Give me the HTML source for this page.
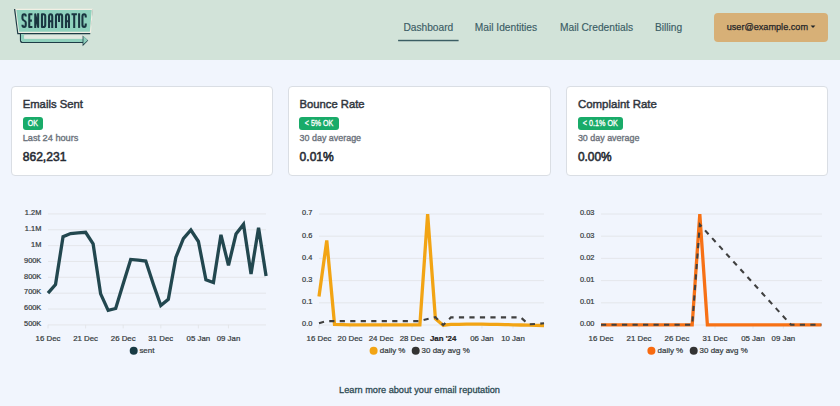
<!DOCTYPE html>
<html><head><meta charset="utf-8"><title>Sendamatic Dashboard</title>
<style>
html,body{margin:0;padding:0;}
body{width:840px;height:406px;overflow:hidden;background:#f1f5fd;position:relative;font-family:"Liberation Sans", sans-serif;}
.hdr{position:absolute;left:0;top:0;width:840px;height:59.6px;background:#d2e3d9;}
.btn{position:absolute;left:714px;top:13px;width:114px;height:29px;background:#d7b077;border-radius:4px;}
.card{position:absolute;top:85.9px;height:89.7px;background:#fff;border:1px solid #dadee4;border-radius:4px;box-sizing:border-box;}
.badge{position:absolute;top:117px;height:13px;background:#19ab69;border-radius:3px;z-index:2;}
svg.ov{position:absolute;left:0;top:0;z-index:3;font-family:"Liberation Sans", sans-serif;}
</style></head>
<body>
<div class="hdr"></div>
<div class="btn"></div>
<div class="badge" style="left:22.5px;width:20.8px"></div><div class="card" style="left:11.1px;width:261.7px"></div><div class="badge" style="left:299.4px;width:39.3px"></div><div class="card" style="left:288.0px;width:263.0px"></div><div class="badge" style="left:577.7px;width:45.2px"></div><div class="card" style="left:566.3px;width:261.7px"></div>
<svg class="ov" width="840" height="406" viewBox="0 0 840 406">
<text x="403.4" y="31.1" font-size="10.2" font-weight="normal" fill="#3b5d65" text-anchor="start" stroke="#3b5d65" stroke-width="0.15">Dashboard</text>
<text x="474.8" y="31.1" font-size="10.2" font-weight="normal" fill="#3b5d65" text-anchor="start" stroke="#3b5d65" stroke-width="0.15">Mail Identities</text>
<text x="560.0" y="31.1" font-size="10.2" font-weight="normal" fill="#3b5d65" text-anchor="start" stroke="#3b5d65" stroke-width="0.15">Mail Credentials</text>
<text x="654.9" y="31.1" font-size="10.2" font-weight="normal" fill="#3b5d65" text-anchor="start" stroke="#3b5d65" stroke-width="0.15">Billing</text>
<rect x="398.1" y="39.8" width="60.5" height="1.45" fill="#3b5e64"/>
<text x="726.7" y="30.4" font-size="9.5" font-weight="normal" fill="#1f2428" text-anchor="start" stroke="#1f2428" stroke-width="0.25" textLength="81.3" lengthAdjust="spacingAndGlyphs">user@example.com</text>
<path d="M810.6 25.4 L815.4 25.4 L813 28 Z" fill="#1f2428"/>

<g>
 <path d="M14.0 8.9 L92.8 8.9 L90.2 34.3 L17.3 34.3 Z" fill="#1e3c46"/>
 <path d="M15.2 8.8 L92.9 8.8 L90.9 32.9 L18.3 32.9 Z" fill="#f1efe4"/>
 <path d="M16.3 9.9 L91.7 9.9 L89.9 31.7 L19.0 31.7 Z" fill="#8fd1bd"/>
 <path d="M19.9 34.0 V40.2 Q19.9 43.1 22.8 43.1 H83.4 V41.9 H23.6 Q21.0 41.9 21.0 39.3 V34.0 Z" fill="#1e3c46"/>
 <path d="M21.0 34.2 V39.3 Q21.0 41.9 23.6 41.9 H83.4 V38.7 H24.2 V34.2 Z" fill="#8fd1bd"/>
 <rect x="24.2" y="35.3" width="59.2" height="3.4" fill="#e1e9e1"/>
 <path d="M82.6 35.6 L88.2 40.6 L82.6 46.2 Z" fill="#1e3c46"/>
 <path d="M83.4 35.9 L87.6 40.3 L83.4 44.2 Z" fill="#8fd1bd"/>
 <g fill="none" stroke="#1a3540" stroke-width="2.05" stroke-linejoin="round">
  <path d="M25.75 16.4 Q25.75 14.25 24.1 14.25 Q22.45 14.25 22.45 16.4 L22.45 18.6 Q22.45 19.9 24.1 20.6 Q25.75 21.3 25.75 22.6 L25.75 24.8 Q25.75 26.95 24.1 26.95 Q22.45 26.95 22.45 24.8"/>
  <path d="M32.4 14.25 H29.25 V26.95 H32.4 M29.25 20.6 H31.9"/>
  <path d="M35.25 27.9 V14.25 L38.15 26.95 V13.3"/>
  <path d="M41.95 14.25 V26.95 H43.4 Q45.25 26.95 45.25 24.9 V16.3 Q45.25 14.25 43.4 14.25 Z"/>
  <path d="M49.05 27.9 V16.6 Q49.05 14.25 50.65 14.25 Q52.25 14.25 52.25 16.6 V27.9 M49.05 21.3 H52.25"/>
  <path d="M55.95 27.9 V16.2 Q55.95 14.25 57.5 14.25 Q59.05 14.25 59.05 16.2 V22 M59.05 16.2 Q59.05 14.25 60.6 14.25 Q62.15 14.25 62.15 16.2 V27.9"/>
  <path d="M65.95 27.9 V16.6 Q65.95 14.25 67.45 14.25 Q68.95 14.25 68.95 16.6 V27.9 M65.95 21.3 H68.95"/>
  <path d="M71.5 14.25 H76.9 M74.2 14.25 V27.9"/>
  <path d="M79.1 13.3 V27.9"/>
  <path d="M85.75 17.6 V16.4 Q85.75 14.25 84.1 14.25 Q82.45 14.25 82.45 16.4 V24.8 Q82.45 26.95 84.1 26.95 Q85.75 26.95 85.75 24.8 V23.6"/>
 </g>
</g>
<text x="22.7" y="108.4" font-size="11.4" font-weight="normal" fill="#30353d" text-anchor="start" stroke="#30353d" stroke-width="0.45" textLength="60.2" lengthAdjust="spacingAndGlyphs">Emails Sent</text>
<text x="32.9" y="126.3" font-size="8.2" font-weight="normal" fill="#ffffff" text-anchor="middle" stroke="#ffffff" stroke-width="0.3" textLength="10.2" lengthAdjust="spacingAndGlyphs">OK</text>
<text x="22.7" y="141.2" font-size="8.8" font-weight="normal" fill="#6c737c" text-anchor="start" stroke="#6c737c" stroke-width="0.35" textLength="55.7" lengthAdjust="spacingAndGlyphs">Last 24 hours</text>
<text x="22.7" y="160.8" font-size="12.4" font-weight="normal" fill="#262b33" text-anchor="start" stroke="#262b33" stroke-width="0.55" textLength="43.7" lengthAdjust="spacingAndGlyphs">862,231</text>
<text x="299.6" y="108.4" font-size="11.4" font-weight="normal" fill="#30353d" text-anchor="start" stroke="#30353d" stroke-width="0.45" textLength="65.0" lengthAdjust="spacingAndGlyphs">Bounce Rate</text>
<text x="319.05" y="126.3" font-size="8.2" font-weight="normal" fill="#ffffff" text-anchor="middle" stroke="#ffffff" stroke-width="0.3" textLength="28.5" lengthAdjust="spacingAndGlyphs">&lt; 5% OK</text>
<text x="299.6" y="141.2" font-size="8.8" font-weight="normal" fill="#6c737c" text-anchor="start" stroke="#6c737c" stroke-width="0.35" textLength="61.5" lengthAdjust="spacingAndGlyphs">30 day average</text>
<text x="299.6" y="160.8" font-size="12.4" font-weight="normal" fill="#262b33" text-anchor="start" stroke="#262b33" stroke-width="0.55" textLength="34.2" lengthAdjust="spacingAndGlyphs">0.01%</text>
<text x="577.9" y="108.4" font-size="11.4" font-weight="normal" fill="#30353d" text-anchor="start" stroke="#30353d" stroke-width="0.45" textLength="79.0" lengthAdjust="spacingAndGlyphs">Complaint Rate</text>
<text x="600.3" y="126.3" font-size="8.2" font-weight="normal" fill="#ffffff" text-anchor="middle" stroke="#ffffff" stroke-width="0.3" textLength="35.0" lengthAdjust="spacingAndGlyphs">&lt; 0.1% OK</text>
<text x="577.9" y="141.2" font-size="8.8" font-weight="normal" fill="#6c737c" text-anchor="start" stroke="#6c737c" stroke-width="0.35" textLength="61.5" lengthAdjust="spacingAndGlyphs">30 day average</text>
<text x="577.9" y="160.8" font-size="12.4" font-weight="normal" fill="#262b33" text-anchor="start" stroke="#262b33" stroke-width="0.55" textLength="33.8" lengthAdjust="spacingAndGlyphs">0.00%</text>
<line x1="48.0" y1="213.9" x2="266" y2="213.9" stroke="#e1e2e6" stroke-width="0.8"/>
<line x1="48.0" y1="229.757" x2="266" y2="229.757" stroke="#e1e2e6" stroke-width="0.8"/>
<line x1="48.0" y1="245.614" x2="266" y2="245.614" stroke="#e1e2e6" stroke-width="0.8"/>
<line x1="48.0" y1="261.471" x2="266" y2="261.471" stroke="#e1e2e6" stroke-width="0.8"/>
<line x1="48.0" y1="277.328" x2="266" y2="277.328" stroke="#e1e2e6" stroke-width="0.8"/>
<line x1="48.0" y1="293.185" x2="266" y2="293.185" stroke="#e1e2e6" stroke-width="0.8"/>
<line x1="48.0" y1="309.04200000000003" x2="266" y2="309.04200000000003" stroke="#e1e2e6" stroke-width="0.8"/>
<line x1="48.0" y1="324.899" x2="266" y2="324.899" stroke="#e1e2e6" stroke-width="0.8"/>
<text x="41.3" y="215.20000000000002" font-size="7.4" font-weight="normal" fill="#373d3f" text-anchor="end" stroke="#373d3f" stroke-width="0.22">1.2M</text>
<text x="41.3" y="231.05700000000002" font-size="7.4" font-weight="normal" fill="#373d3f" text-anchor="end" stroke="#373d3f" stroke-width="0.22">1.1M</text>
<text x="41.3" y="246.91400000000002" font-size="7.4" font-weight="normal" fill="#373d3f" text-anchor="end" stroke="#373d3f" stroke-width="0.22">1M</text>
<text x="41.3" y="262.771" font-size="7.4" font-weight="normal" fill="#373d3f" text-anchor="end" stroke="#373d3f" stroke-width="0.22">900K</text>
<text x="41.3" y="278.628" font-size="7.4" font-weight="normal" fill="#373d3f" text-anchor="end" stroke="#373d3f" stroke-width="0.22">800K</text>
<text x="41.3" y="294.485" font-size="7.4" font-weight="normal" fill="#373d3f" text-anchor="end" stroke="#373d3f" stroke-width="0.22">700K</text>
<text x="41.3" y="310.34200000000004" font-size="7.4" font-weight="normal" fill="#373d3f" text-anchor="end" stroke="#373d3f" stroke-width="0.22">600K</text>
<text x="41.3" y="326.199" font-size="7.4" font-weight="normal" fill="#373d3f" text-anchor="end" stroke="#373d3f" stroke-width="0.22">500K</text>
<line x1="48.0" y1="324.899" x2="48.0" y2="328.399" stroke="#e1e2e6" stroke-width="0.8"/>
<text x="48.0" y="341.2" font-size="7.85" font-weight="normal" fill="#373d3f" text-anchor="middle" stroke="#373d3f" stroke-width="0.22">16 Dec</text>
<line x1="85.6" y1="324.899" x2="85.6" y2="328.399" stroke="#e1e2e6" stroke-width="0.8"/>
<text x="85.6" y="341.2" font-size="7.85" font-weight="normal" fill="#373d3f" text-anchor="middle" stroke="#373d3f" stroke-width="0.22">21 Dec</text>
<line x1="123.19999999999999" y1="324.899" x2="123.19999999999999" y2="328.399" stroke="#e1e2e6" stroke-width="0.8"/>
<text x="123.19999999999999" y="341.2" font-size="7.85" font-weight="normal" fill="#373d3f" text-anchor="middle" stroke="#373d3f" stroke-width="0.22">26 Dec</text>
<line x1="160.8" y1="324.899" x2="160.8" y2="328.399" stroke="#e1e2e6" stroke-width="0.8"/>
<text x="160.8" y="341.2" font-size="7.85" font-weight="normal" fill="#373d3f" text-anchor="middle" stroke="#373d3f" stroke-width="0.22">31 Dec</text>
<line x1="198.39999999999998" y1="324.899" x2="198.39999999999998" y2="328.399" stroke="#e1e2e6" stroke-width="0.8"/>
<text x="198.39999999999998" y="341.2" font-size="7.85" font-weight="normal" fill="#373d3f" text-anchor="middle" stroke="#373d3f" stroke-width="0.22">05 Jan</text>
<line x1="228.48" y1="324.899" x2="228.48" y2="328.399" stroke="#e1e2e6" stroke-width="0.8"/>
<text x="228.48" y="341.2" font-size="7.85" font-weight="normal" fill="#373d3f" text-anchor="middle" stroke="#373d3f" stroke-width="0.22">09 Jan</text>
<polyline points="48.00,293.2 55.52,284.5 63.04,236.7 70.56,233.5 78.08,232.8 85.60,232.3 93.12,243.9 100.64,293.9 108.16,310.4 115.68,308.5 123.20,283.8 130.72,259.4 138.24,260.1 145.76,261.1 153.28,284 160.80,305.5 168.32,299.3 175.84,257.4 183.36,238.6 190.88,230 198.40,241.5 205.92,279.8 213.44,282.5 220.96,234.8 228.48,265.4 236.00,234 243.52,224.4 251.04,273.9 258.56,227.7 266.08,276.1" fill="none" stroke="#22474f" stroke-width="3.3" stroke-linejoin="miter" stroke-miterlimit="4"/>
<circle cx="133.7" cy="350.7" r="4" fill="#183a44"/>
<text x="139.4" y="353.0" font-size="7.95" font-weight="normal" fill="#373d3f" text-anchor="start" stroke="#373d3f" stroke-width="0.22">sent</text>
<line x1="319.0" y1="214.0" x2="544" y2="214.0" stroke="#e1e2e6" stroke-width="0.8"/>
<line x1="319.0" y1="236.2" x2="544" y2="236.2" stroke="#e1e2e6" stroke-width="0.8"/>
<line x1="319.0" y1="258.4" x2="544" y2="258.4" stroke="#e1e2e6" stroke-width="0.8"/>
<line x1="319.0" y1="280.6" x2="544" y2="280.6" stroke="#e1e2e6" stroke-width="0.8"/>
<line x1="319.0" y1="302.8" x2="544" y2="302.8" stroke="#e1e2e6" stroke-width="0.8"/>
<line x1="319.0" y1="325.0" x2="544" y2="325.0" stroke="#e1e2e6" stroke-width="0.8"/>
<text x="312.3" y="215.3" font-size="7.4" font-weight="normal" fill="#373d3f" text-anchor="end" stroke="#373d3f" stroke-width="0.22">0.7</text>
<text x="312.3" y="237.5" font-size="7.4" font-weight="normal" fill="#373d3f" text-anchor="end" stroke="#373d3f" stroke-width="0.22">0.6</text>
<text x="312.3" y="259.7" font-size="7.4" font-weight="normal" fill="#373d3f" text-anchor="end" stroke="#373d3f" stroke-width="0.22">0.4</text>
<text x="312.3" y="281.90000000000003" font-size="7.4" font-weight="normal" fill="#373d3f" text-anchor="end" stroke="#373d3f" stroke-width="0.22">0.3</text>
<text x="312.3" y="304.1" font-size="7.4" font-weight="normal" fill="#373d3f" text-anchor="end" stroke="#373d3f" stroke-width="0.22">0.1</text>
<text x="312.3" y="326.3" font-size="7.4" font-weight="normal" fill="#373d3f" text-anchor="end" stroke="#373d3f" stroke-width="0.22">0.0</text>
<line x1="319.0" y1="325.0" x2="319.0" y2="328.5" stroke="#e1e2e6" stroke-width="0.8"/>
<text x="319.0" y="341.2" font-size="7.85" font-weight="normal" fill="#373d3f" text-anchor="middle" stroke="#373d3f" stroke-width="0.22">16 Dec</text>
<line x1="350.04" y1="325.0" x2="350.04" y2="328.5" stroke="#e1e2e6" stroke-width="0.8"/>
<text x="350.04" y="341.2" font-size="7.85" font-weight="normal" fill="#373d3f" text-anchor="middle" stroke="#373d3f" stroke-width="0.22">20 Dec</text>
<line x1="381.08" y1="325.0" x2="381.08" y2="328.5" stroke="#e1e2e6" stroke-width="0.8"/>
<text x="381.08" y="341.2" font-size="7.85" font-weight="normal" fill="#373d3f" text-anchor="middle" stroke="#373d3f" stroke-width="0.22">24 Dec</text>
<line x1="412.12" y1="325.0" x2="412.12" y2="328.5" stroke="#e1e2e6" stroke-width="0.8"/>
<text x="412.12" y="341.2" font-size="7.85" font-weight="normal" fill="#373d3f" text-anchor="middle" stroke="#373d3f" stroke-width="0.22">28 Dec</text>
<line x1="443.15999999999997" y1="325.0" x2="443.15999999999997" y2="328.5" stroke="#e1e2e6" stroke-width="0.8"/>
<text x="443.15999999999997" y="341.2" font-size="7.85" font-weight="bold" fill="#222" text-anchor="middle" stroke="#222" stroke-width="0.2">Jan '24</text>
<line x1="481.96000000000004" y1="325.0" x2="481.96000000000004" y2="328.5" stroke="#e1e2e6" stroke-width="0.8"/>
<text x="481.96000000000004" y="341.2" font-size="7.85" font-weight="normal" fill="#373d3f" text-anchor="middle" stroke="#373d3f" stroke-width="0.22">06 Jan</text>
<line x1="513.0" y1="325.0" x2="513.0" y2="328.5" stroke="#e1e2e6" stroke-width="0.8"/>
<text x="513.0" y="341.2" font-size="7.85" font-weight="normal" fill="#373d3f" text-anchor="middle" stroke="#373d3f" stroke-width="0.22">10 Jan</text>
<polyline points="319.00,296.6 326.76,240.4 334.52,324.5 342.28,324.7 350.04,324.8 357.80,324.8 365.56,324.8 373.32,324.8 381.08,324.8 388.84,324.8 396.60,324.8 404.36,324.8 412.12,324.8 419.88,324.8 427.64,214.2 435.40,318.8 443.16,325.2 450.92,324.4 458.68,324.3 466.44,324.2 474.20,324.2 481.96,324.2 489.72,324.3 497.48,324.4 505.24,324.6 513.00,324.8 520.76,325.0 528.52,325.2 536.28,325.4 544.04,325.5" fill="none" stroke="#f2a414" stroke-width="3.3" stroke-linejoin="miter" stroke-miterlimit="4"/>
<polyline points="319.00,323.2 326.76,321.1 334.52,321.1 342.28,321.1 350.04,321.1 357.80,321.1 365.56,321.1 373.32,321.1 381.08,321.1 388.84,321.1 396.60,321.1 404.36,321.1 412.12,321.1 419.88,321.1 427.64,319.0 435.40,317.2 443.16,325.0 450.92,317.4 458.68,317.4 466.44,317.4 474.20,317.4 481.96,317.4 489.72,317.4 497.48,317.4 505.24,317.4 513.00,317.4 520.76,317.4 528.52,324.3 536.28,324.0 544.04,323.3" fill="none" stroke="#404040" stroke-width="2.1" stroke-dasharray="5.2 5.3"/>
<circle cx="373.6" cy="350.7" r="4" fill="#f2a414"/>
<text x="379.8" y="353.1" font-size="7.95" font-weight="normal" fill="#373d3f" text-anchor="start" stroke="#373d3f" stroke-width="0.22">daily %</text>
<circle cx="415.7" cy="350.7" r="4" fill="#333333"/>
<text x="421.6" y="353.1" font-size="7.95" font-weight="normal" fill="#373d3f" text-anchor="start" stroke="#373d3f" stroke-width="0.22">30 day avg %</text>
<line x1="601.0" y1="214.0" x2="822" y2="214.0" stroke="#e1e2e6" stroke-width="0.8"/>
<line x1="601.0" y1="236.2" x2="822" y2="236.2" stroke="#e1e2e6" stroke-width="0.8"/>
<line x1="601.0" y1="258.4" x2="822" y2="258.4" stroke="#e1e2e6" stroke-width="0.8"/>
<line x1="601.0" y1="280.6" x2="822" y2="280.6" stroke="#e1e2e6" stroke-width="0.8"/>
<line x1="601.0" y1="302.8" x2="822" y2="302.8" stroke="#e1e2e6" stroke-width="0.8"/>
<line x1="601.0" y1="325.0" x2="822" y2="325.0" stroke="#e1e2e6" stroke-width="0.8"/>
<text x="594.4" y="215.3" font-size="7.4" font-weight="normal" fill="#373d3f" text-anchor="end" stroke="#373d3f" stroke-width="0.22">0.03</text>
<text x="594.4" y="237.5" font-size="7.4" font-weight="normal" fill="#373d3f" text-anchor="end" stroke="#373d3f" stroke-width="0.22">0.03</text>
<text x="594.4" y="259.7" font-size="7.4" font-weight="normal" fill="#373d3f" text-anchor="end" stroke="#373d3f" stroke-width="0.22">0.02</text>
<text x="594.4" y="281.90000000000003" font-size="7.4" font-weight="normal" fill="#373d3f" text-anchor="end" stroke="#373d3f" stroke-width="0.22">0.01</text>
<text x="594.4" y="304.1" font-size="7.4" font-weight="normal" fill="#373d3f" text-anchor="end" stroke="#373d3f" stroke-width="0.22">0.01</text>
<text x="594.4" y="326.3" font-size="7.4" font-weight="normal" fill="#373d3f" text-anchor="end" stroke="#373d3f" stroke-width="0.22">0.00</text>
<line x1="601.0" y1="325.0" x2="601.0" y2="328.5" stroke="#e1e2e6" stroke-width="0.8"/>
<text x="601.0" y="341.2" font-size="7.85" font-weight="normal" fill="#373d3f" text-anchor="middle" stroke="#373d3f" stroke-width="0.22">16 Dec</text>
<line x1="639.0" y1="325.0" x2="639.0" y2="328.5" stroke="#e1e2e6" stroke-width="0.8"/>
<text x="639.0" y="341.2" font-size="7.85" font-weight="normal" fill="#373d3f" text-anchor="middle" stroke="#373d3f" stroke-width="0.22">21 Dec</text>
<line x1="677.0" y1="325.0" x2="677.0" y2="328.5" stroke="#e1e2e6" stroke-width="0.8"/>
<text x="677.0" y="341.2" font-size="7.85" font-weight="normal" fill="#373d3f" text-anchor="middle" stroke="#373d3f" stroke-width="0.22">26 Dec</text>
<line x1="715.0" y1="325.0" x2="715.0" y2="328.5" stroke="#e1e2e6" stroke-width="0.8"/>
<text x="715.0" y="341.2" font-size="7.85" font-weight="normal" fill="#373d3f" text-anchor="middle" stroke="#373d3f" stroke-width="0.22">31 Dec</text>
<line x1="753.0" y1="325.0" x2="753.0" y2="328.5" stroke="#e1e2e6" stroke-width="0.8"/>
<text x="753.0" y="341.2" font-size="7.85" font-weight="normal" fill="#373d3f" text-anchor="middle" stroke="#373d3f" stroke-width="0.22">05 Jan</text>
<line x1="783.4" y1="325.0" x2="783.4" y2="328.5" stroke="#e1e2e6" stroke-width="0.8"/>
<text x="783.4" y="341.2" font-size="7.85" font-weight="normal" fill="#373d3f" text-anchor="middle" stroke="#373d3f" stroke-width="0.22">09 Jan</text>
<polyline points="601.00,324.8 608.60,324.8 616.20,324.8 623.80,324.8 631.40,324.8 639.00,324.8 646.60,324.8 654.20,324.8 661.80,324.8 669.40,324.8 677.00,324.8 684.60,324.8 692.20,324.8 699.80,214.2 707.40,324.8 715.00,324.8 722.60,324.8 730.20,324.8 737.80,324.8 745.40,324.8 753.00,324.8 760.60,324.8 768.20,324.8 775.80,324.8 783.40,324.8 791.00,324.8 798.60,324.8 806.20,324.8 813.80,324.8 821.40,324.8" fill="none" stroke="#f77115" stroke-width="3.3" stroke-linejoin="miter" stroke-miterlimit="4"/>
<polyline points="601.00,324.80 608.60,324.80 616.20,324.80 623.80,324.80 631.40,324.80 639.00,324.80 646.60,324.80 654.20,324.80 661.80,324.80 669.40,324.80 677.00,324.80 684.60,324.80 692.20,324.80 699.80,224.60 707.40,232.95 715.00,241.30 722.60,249.65 730.20,258.00 737.80,266.35 745.40,274.70 753.00,283.05 760.60,291.40 768.20,299.75 775.80,308.10 783.40,316.45 791.00,324.80 798.60,324.80 806.20,324.80 813.80,324.80 821.40,324.80" fill="none" stroke="#404040" stroke-width="2.1" stroke-dasharray="5.2 5.3"/>
<circle cx="651.4" cy="350.7" r="4" fill="#f86a10"/>
<text x="657.6" y="353.1" font-size="7.95" font-weight="normal" fill="#373d3f" text-anchor="start" stroke="#373d3f" stroke-width="0.22">daily %</text>
<circle cx="693.7" cy="350.7" r="4" fill="#333333"/>
<text x="699.6" y="353.1" font-size="7.95" font-weight="normal" fill="#373d3f" text-anchor="start" stroke="#373d3f" stroke-width="0.22">30 day avg %</text>
<text x="339.1" y="393.3" font-size="9.6" font-weight="normal" fill="#2d4b53" text-anchor="start" stroke="#2d4b53" stroke-width="0.3" textLength="160.9" lengthAdjust="spacingAndGlyphs">Learn more about your email reputation</text>
</svg>
</body></html>
